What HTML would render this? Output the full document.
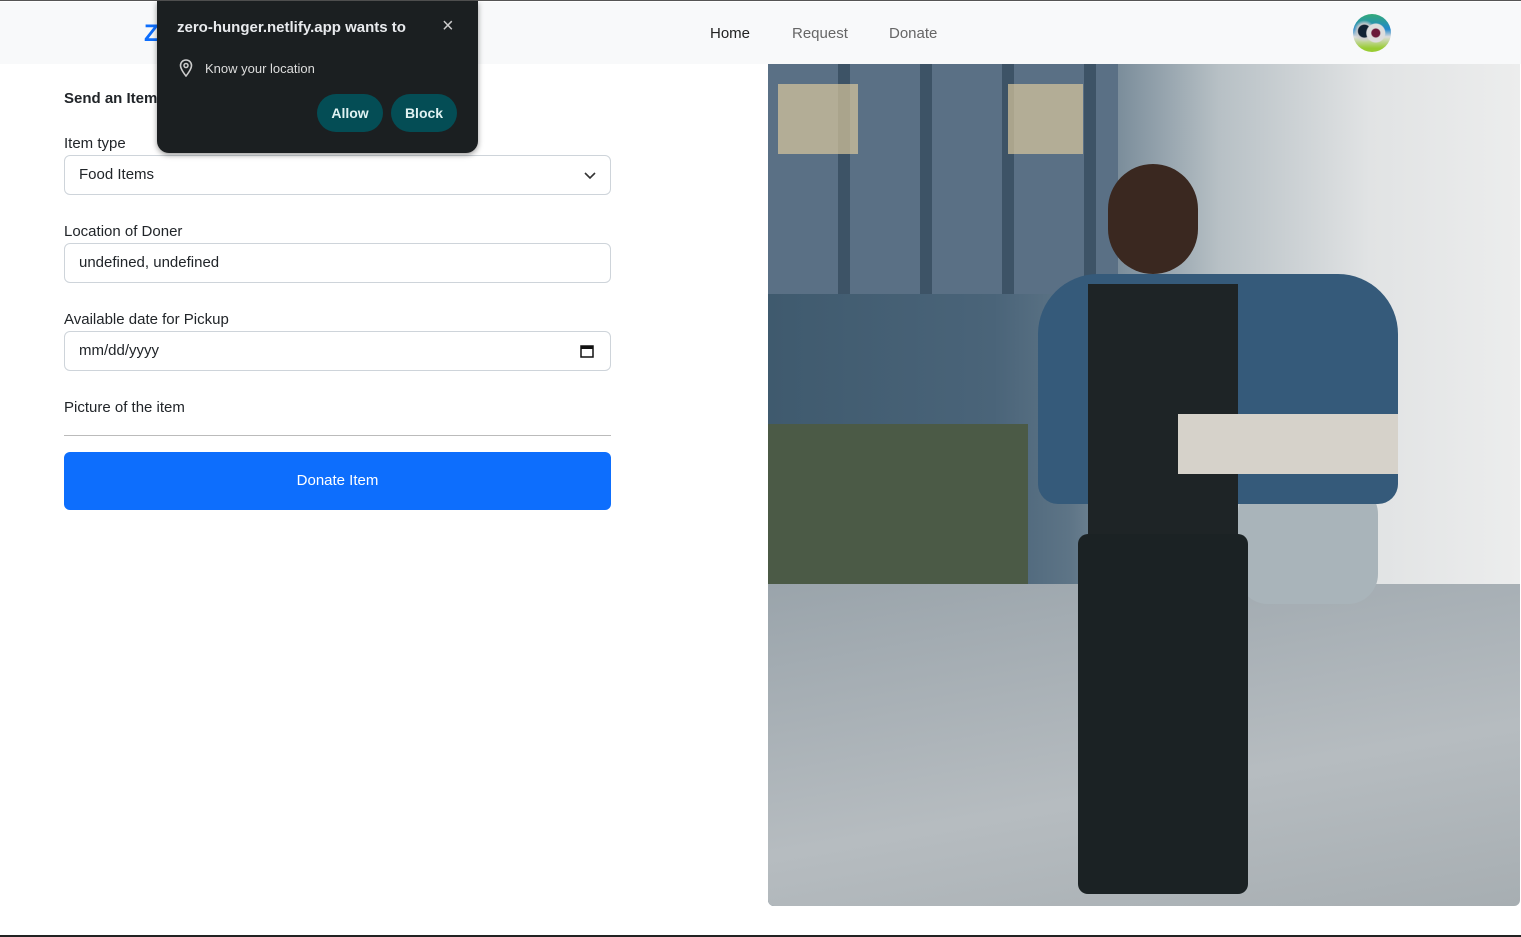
<!DOCTYPE html>
<html><head><style>
*{box-sizing:border-box;margin:0;padding:0}
body{width:1521px;height:937px;overflow:hidden;background:#fff;font-family:"Liberation Sans",sans-serif;color:#212529;position:relative;border-top:1px solid #555;border-bottom:2px solid #222}
.nav{position:absolute;top:1px;left:0;width:1521px;height:62px;background:#f8f9fa}
.brand{position:absolute;left:144px;top:18px;color:#0d6efd;font-size:24px;font-weight:bold}
.links{position:absolute;top:23px;font-size:15px}
.links span{position:absolute;white-space:nowrap}
.av{position:absolute;left:1353px;top:12px;width:38px;height:38px;border-radius:50%;background:radial-gradient(circle at 60% 50%,#6b1a3a 0 4px,#ddd 5px 9px,transparent 10px),radial-gradient(circle at 30% 45%,#123 0 6px,#ccc 7px,transparent 11px),linear-gradient(#3a7 0,#28c 40%,#ddd 60%,#9c3 90%)}
label,.lbl{position:absolute;left:64px;font-size:15px}
.inp{position:absolute;left:64px;width:547px;height:40px;border:1px solid #ced4da;border-radius:6px;font-size:15px;padding:10px 14px}
.btn{position:absolute;left:64px;top:451px;width:547px;height:58px;background:#0d6efd;border-radius:6px;color:#fff;font-size:15px;text-align:center;line-height:58px}
.img{position:absolute;left:768px;top:63px;width:752px;height:842px;border-radius:0 0 6px 6px;overflow:hidden;background:linear-gradient(90deg,#3f5a6e 0,#4a6479 30%,#5d7486 40%,#b7c0c5 60%,#e1e3e4 80%,#eceded 100%)}
.pop{position:absolute;left:157px;top:0;width:321px;height:152px;background:#1b1f21;border-radius:0 0 12px 12px;color:#e8eaed;box-shadow:0 2px 6px rgba(0,0,0,.4)}
.pb{position:absolute;top:93px;height:38px;border-radius:19px;background:#044d55;color:#e0f2f2;font-weight:bold;font-size:14px;line-height:38px;text-align:center}
</style></head><body>
<div class="nav">
<div class="brand">Z</div>
<div class="links"><span style="left:710px;color:#222">Home</span><span style="left:792px;color:#666">Request</span><span style="left:889px;color:#666">Donate</span></div>
<div class="av"></div>
</div>
<div class="lbl" style="top:89px;font-weight:bold">Send an Item</div>
<label style="top:134px">Item type</label>
<div class="inp" style="top:154px">Food Items<svg style="position:absolute;right:14px;top:14px" width="12" height="10" viewBox="0 0 12 10"><path d="M1 3l5 5 5-5" stroke="#333" stroke-width="1.6" fill="none"/></svg></div>
<label style="top:222px">Location of Doner</label>
<div class="inp" style="top:242px">undefined, undefined</div>
<label style="top:310px">Available date for Pickup</label>
<div class="inp" style="top:330px">mm/dd/yyyy<svg style="position:absolute;right:16px;top:12px" width="14" height="14" viewBox="0 0 14 14"><rect x="1" y="2" width="12" height="11" fill="none" stroke="#111" stroke-width="1.5"/><rect x="1" y="2" width="12" height="3" fill="#111"/></svg></div>
<label style="top:398px">Picture of the item</label>
<div style="position:absolute;left:64px;top:434px;width:547px;height:1px;background:#bbb"></div>
<div class="btn">Donate Item</div>
<div class="img">
<div style="position:absolute;left:0;top:0;width:350px;height:230px;background:repeating-linear-gradient(90deg,#5a7085 0 70px,#3d5366 70px 82px)"></div>
<div style="position:absolute;left:10px;top:20px;width:80px;height:70px;background:#d9c79c;opacity:.7"></div>
<div style="position:absolute;left:240px;top:20px;width:75px;height:70px;background:#d9c79c;opacity:.7"></div>
<div style="position:absolute;left:0;top:360px;width:260px;height:300px;background:#4b5a46"></div>
<div style="position:absolute;left:0;top:520px;width:752px;height:322px;background:linear-gradient(170deg,#9aa4ab,#b6bcc0 60%,#a7aeb2)"></div>
<div style="position:absolute;left:470px;top:420px;width:140px;height:120px;border-radius:30px;background:#a9b4ba"></div>
<div style="position:absolute;left:340px;top:100px;width:90px;height:110px;border-radius:45px;background:#3a2820"></div>
<div style="position:absolute;left:270px;top:210px;width:360px;height:230px;border-radius:60px 60px 20px 20px;background:#355a7a"></div>
<div style="position:absolute;left:320px;top:220px;width:150px;height:270px;background:#1e2426"></div>
<div style="position:absolute;left:410px;top:350px;width:220px;height:60px;background:#d6d2ca"></div>
<div style="position:absolute;left:310px;top:470px;width:170px;height:360px;background:#1b2224;border-radius:10px"></div>
</div>
<div class="pop">
<div style="position:absolute;left:20px;top:18px;font-size:15px;font-weight:bold">zero-hunger.netlify.app wants to</div>
<div style="position:absolute;left:285px;top:14px;font-size:20px;color:#ccc">×</div>
<svg style="position:absolute;left:22px;top:58px" width="14" height="18" viewBox="0 0 14 18"><path d="M7 1C3.7 1 1.5 3.5 1.5 6.5 1.5 10.5 7 17 7 17s5.5-6.5 5.5-10.5C12.5 3.5 10.3 1 7 1z" fill="none" stroke="#ccc" stroke-width="1.6"/><circle cx="7" cy="6.5" r="2" fill="none" stroke="#ccc" stroke-width="1.5"/></svg>
<div style="position:absolute;left:48px;top:60px;font-size:13px;color:#ddd">Know your location</div>
<div class="pb" style="left:160px;width:66px">Allow</div>
<div class="pb" style="left:234px;width:66px">Block</div>
</div>
</body></html>
